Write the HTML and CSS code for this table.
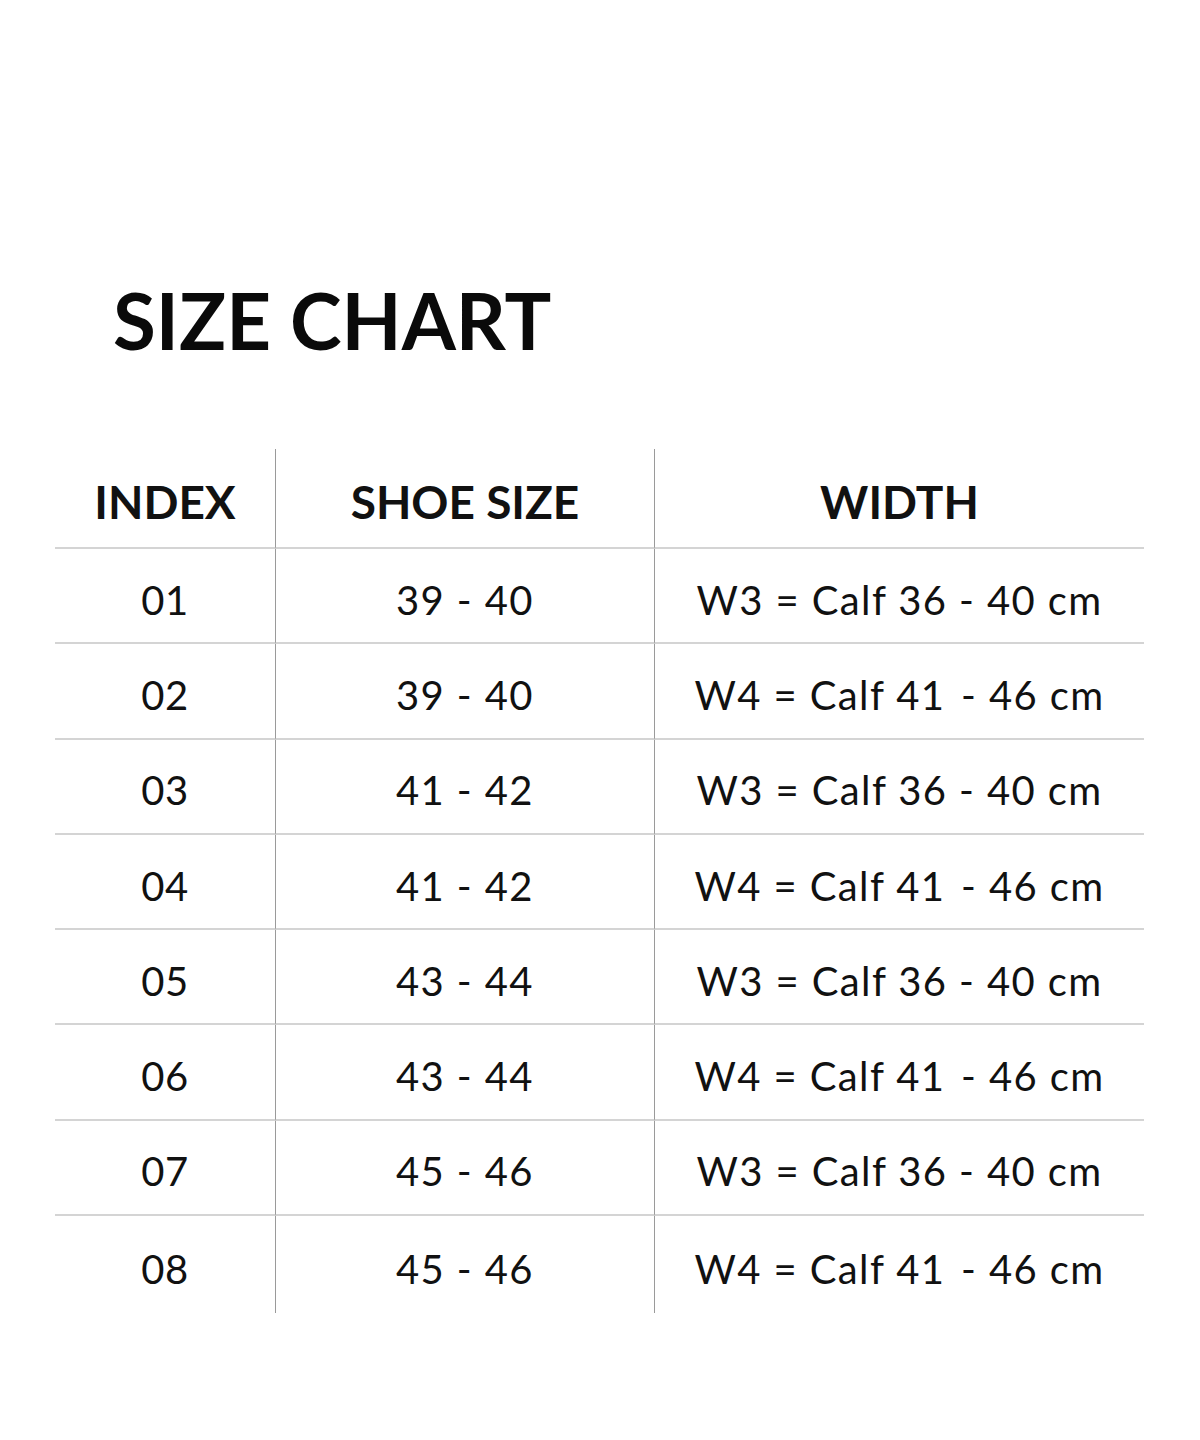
FILE: index.html
```html
<!DOCTYPE html>
<html>
<head>
<meta charset="utf-8">
<link rel="stylesheet" href="styles.css">
</head>
<body>
<div class="page">
  <h1 class="title">SIZE CHART</h1>
  <div class="chart">
    <div class="cell head c1">INDEX</div>
    <div class="cell head c2">SHOE SIZE</div>
    <div class="cell head c3">WIDTH</div>

    <div class="cell c1">01</div><div class="cell c2">39 - 40</div><div class="cell c3">W3 = Calf 36 - 40 cm</div>
    <div class="cell c1">02</div><div class="cell c2">39 - 40</div><div class="cell c3">W4 = Calf 41<span class="gap"></span> - 46 cm</div>
    <div class="cell c1">03</div><div class="cell c2">41 - 42</div><div class="cell c3">W3 = Calf 36 - 40 cm</div>
    <div class="cell c1">04</div><div class="cell c2">41 - 42</div><div class="cell c3">W4 = Calf 41<span class="gap"></span> - 46 cm</div>
    <div class="cell c1">05</div><div class="cell c2">43 - 44</div><div class="cell c3">W3 = Calf 36 - 40 cm</div>
    <div class="cell c1">06</div><div class="cell c2">43 - 44</div><div class="cell c3">W4 = Calf 41<span class="gap"></span> - 46 cm</div>
    <div class="cell c1">07</div><div class="cell c2">45 - 46</div><div class="cell c3">W3 = Calf 36 - 40 cm</div>
    <div class="cell last c1">08</div><div class="cell last c2">45 - 46</div><div class="cell last c3">W4 = Calf 41<span class="gap"></span> - 46 cm</div>
  </div>
</div>
</body>
</html>
```

FILE: styles.css
```css
html, body {
  margin: 0;
  padding: 0;
  background: #ffffff;
}

body {
  font-family: "Lato", "Liberation Sans", sans-serif;
  color: #111111;
}

.page {
  width: 1200px;
  height: 1440px;
  padding-top: 270px;
  box-sizing: border-box;
}

.title {
  margin: 0 0 0 113px;
  font-size: 78px;
  font-weight: 700;
  line-height: 100px;
  letter-spacing: 0;
  color: #0a0a0a;
}

.chart {
  margin: 79px 0 0 55px;
  width: 1089px;
  display: grid;
  grid-template-columns: 220px 379px 490px;
  grid-template-rows: 100px repeat(7, 95.3px) 97px;
}

.cell {
  display: flex;
  align-items: center;
  justify-content: center;
  box-sizing: border-box;
  border-bottom: 2px solid #d4d4d4;
  font-size: 40px;
  font-weight: 400;
  letter-spacing: 1.4px;
  white-space: pre;
  padding-top: 8px;
}

.cell.last {
  border-bottom: none;
}

.c2, .c3 {
  border-left: 1px solid #9a9a9a;
}

.c1 {
  letter-spacing: 0.5px;
}

.gap {
  display: inline-block;
  width: 4px;
}

.head {
  font-size: 46px;
  font-weight: 700;
  letter-spacing: 0;
  padding-top: 6px;
}
```
